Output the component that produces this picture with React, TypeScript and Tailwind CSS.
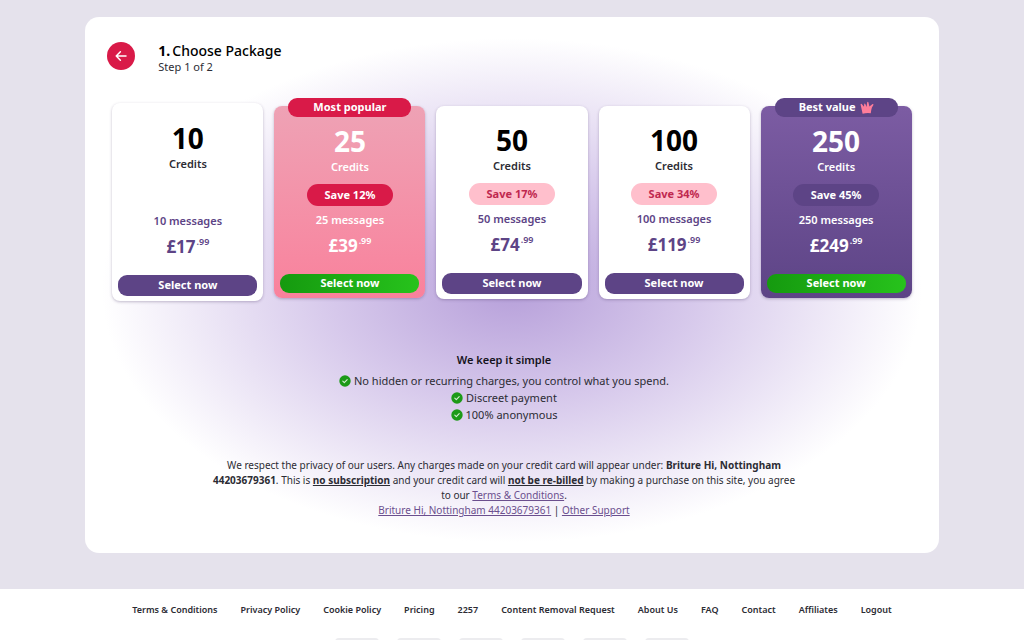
import clsx from "clsx";

type Variant = "plain" | "popular" | "best";

type Package = {
  credits: number;
  pounds: number;
  pence: string;
  save?: string;
  badge?: string;
  variant: Variant;
};

const packages: Package[] = [
  { credits: 10, pounds: 17, pence: "99", variant: "plain" },
  { credits: 25, pounds: 39, pence: "99", save: "12%", badge: "Most popular", variant: "popular" },
  { credits: 50, pounds: 74, pence: "99", save: "17%", variant: "plain" },
  { credits: 100, pounds: 119, pence: "99", save: "34%", variant: "plain" },
  { credits: 250, pounds: 249, pence: "99", save: "45%", badge: "Best value", variant: "best" },
];

const perks = [
  "No hidden or recurring charges, you control what you spend.",
  "Discreet payment",
  "100% anonymous",
];

const footerLinks = [
  "Terms & Conditions",
  "Privacy Policy",
  "Cookie Policy",
  "Pricing",
  "2257",
  "Content Removal Request",
  "About Us",
  "FAQ",
  "Contact",
  "Affiliates",
  "Logout",
];

const cardStyles: Record<Variant, string> = {
  plain: "bg-white text-[#5d4486]",
  popular: "bg-linear-to-b from-[#eea2b5] to-[#f9819c] text-white",
  best: "bg-linear-to-b from-[#7c5ca3] to-[#5d4486] text-white",
};

const pillStyles: Record<Variant, string> = {
  plain: "bg-[#ffbfcc] text-[#c0284f]",
  popular: "bg-[#d91a48] text-white",
  best: "bg-[#5d4486] text-white",
};

function Crown() {
  return (
    <svg viewBox="0 0 14 14" className="h-[14px] w-[14px]" fill="#ff7d9a" aria-hidden="true">
      <path d="M2.6 12.8 .6 3.6Q.6 2.4 1.7 2.9L4 5.8 4.2 3Q4.7 2.2 5.3 3L6.6 6 7.2 1.2Q7.8.4 8.4 1.2L9.4 5.6 12.6 3Q13.8 2.9 13.4 4L11.9 6.6Q11 9.4 10.8 12.2Q6.8 11.4 2.6 12.8Z" />
    </svg>
  );
}

function Check() {
  return (
    <svg viewBox="0 0 12 12" className="h-3 w-3 shrink-0" aria-hidden="true">
      <circle cx="6" cy="6" r="5.7" fill="#1c9a17" />
      <path
        d="M3.8 6.2 5.3 7.6 8.2 4.7"
        fill="none"
        stroke="#d5f0d3"
        strokeWidth="1.1"
        strokeLinecap="round"
        strokeLinejoin="round"
      />
    </svg>
  );
}

function PackageCard({ pkg }: { pkg: Package }) {
  const plain = pkg.variant === "plain";
  const tall = !pkg.save;
  return (
    <article
      className={clsx(
        "relative flex flex-col items-center rounded-lg px-[6px] pb-[5px] shadow-[0_1px_3px_rgba(60,40,90,0.3)]",
        plain && !tall ? "pt-5" : "pt-[21px]",
        cardStyles[pkg.variant],
      )}
    >
      {pkg.badge && (
        <div
          className={clsx(
            "absolute inset-x-[14px] -top-2 flex h-[19px] items-center justify-center gap-1 rounded-[9px] text-[11px] font-bold",
            pillStyles[pkg.variant],
          )}
        >
          {pkg.badge}
          {pkg.variant === "best" && <Crown />}
        </div>
      )}
      <h2 className="flex flex-col items-center gap-1">
        <span className={clsx("text-[28px] leading-7 font-bold", plain && "text-black")}>
          {pkg.credits}
        </span>
        <span className={clsx("text-[11px] leading-4 font-semibold", plain && "text-[#2c2c34]")}>
          Credits
        </span>
      </h2>
      {pkg.save ? (
        <p
          className={clsx(
            "mt-[9px] h-[22px] w-[86px] rounded-full text-center text-[11px] leading-[22px] font-bold",
            pillStyles[pkg.variant],
          )}
        >
          Save {pkg.save}
        </p>
      ) : (
        <div className="mt-[9px] h-[26px]" />
      )}
      <p className="mt-[5px] text-[11px] leading-[18px] font-semibold">{pkg.credits} messages</p>
      <p className="mt-[5px] flex gap-px text-[17px] leading-6 font-bold">
        £{pkg.pounds}
        <span className="text-[9px] leading-[14px] font-semibold">.{pkg.pence}</span>
      </p>
      <button
        type="button"
        className={clsx(
          "mt-4 w-full cursor-pointer rounded-[9px] text-[11px] font-bold text-white",
          plain
            ? "h-[21px] bg-[#5d4486]"
            : "h-[19px] bg-linear-to-r from-[#159a0f] to-[#27c31c]",
        )}
      >
        Select now
      </button>
    </article>
  );
}

export default function App() {
  return (
    <div className="min-h-screen bg-[#e5e2ec] font-['Noto_Sans',sans-serif] text-[#2c2c34]">
      <div className="pt-[17px] pb-9">
        <main className="mx-auto w-5/6 rounded-[14px] bg-white bg-[radial-gradient(ellipse_closest-side_at_50%_51%,#b7a0da_0%,#d6c8eb_42%,#ffffff_96%)] pt-[25px] pb-[35px]">
          <header className="flex items-start gap-[23px] px-[22px]">
            <button
              type="button"
              aria-label="Back"
              className="flex h-7 w-7 cursor-pointer items-center justify-center rounded-full bg-[#d91a48]"
            >
              <svg viewBox="0 0 12 12" className="h-3 w-3" fill="none" stroke="#fff" strokeWidth="1.5" strokeLinecap="round" strokeLinejoin="round">
                <path d="M11 6H1.2M5.4 1.8 1.2 6l4.2 4.2" />
              </svg>
            </button>
            <div>
              <h1 className="flex gap-[2px] text-[14px] leading-[17px] font-medium text-black">
                <b>1.</b> Choose Package
              </h1>
              <p className="text-[11px] leading-4">Step 1 of 2</p>
            </div>
          </header>

          <section className="mt-7 grid grid-cols-5 items-center gap-[11px] px-[27px]">
            {packages.map((pkg) => (
              <PackageCard key={pkg.credits} pkg={pkg} />
            ))}
          </section>

          <div className="pr-4 text-center">
            <section className="mt-[50px] text-[11px]">
              <h3 className="leading-[18px] font-semibold text-[#15131c]">We keep it simple</h3>
              <ul className="mt-[3px] leading-[17px]">
                {perks.map((perk) => (
                  <li key={perk} className="flex items-center justify-center gap-[3px]">
                    <Check />
                    {perk}
                  </li>
                ))}
              </ul>
            </section>

            <section className="mx-auto mt-[35px] max-w-[590px] text-[10px] leading-[15px]">
              <p>
                We respect the privacy of our users. Any charges made on your credit card will
                appear under: <b>Briture Hi, Nottingham 44203679361</b>. This is{" "}
                <b className="underline">no subscription</b> and your credit card will{" "}
                <b className="underline">not be re-billed</b> by making a purchase on this site, you
                agree to our{" "}
                <a href="#terms" className="text-[#6b4f8e] underline">
                  Terms &amp; Conditions
                </a>
                .
              </p>
              <p>
                <a href="#briture" className="text-[#6b4f8e] underline">
                  Briture Hi, Nottingham 44203679361
                </a>{" "}
                |{" "}
                <a href="#support" className="text-[#6b4f8e] underline">
                  Other Support
                </a>
              </p>
            </section>
          </div>
        </main>
      </div>

      <footer className="bg-white pt-[14px] pb-6">
        <nav className="flex flex-wrap justify-center gap-x-[23px] text-[9px] leading-[14px] font-semibold">
          {footerLinks.map((link) => (
            <a key={link} href="#footer">
              {link}
            </a>
          ))}
        </nav>
        {/* payment method tiles */}
        <div className="mt-[21px] flex justify-center gap-[18px]">
          {[0, 1, 2, 3, 4, 5].map((i) => (
            <div key={i} className="h-7 w-11 rounded-sm bg-[#ececef]" />
          ))}
        </div>
      </footer>
    </div>
  );
}
